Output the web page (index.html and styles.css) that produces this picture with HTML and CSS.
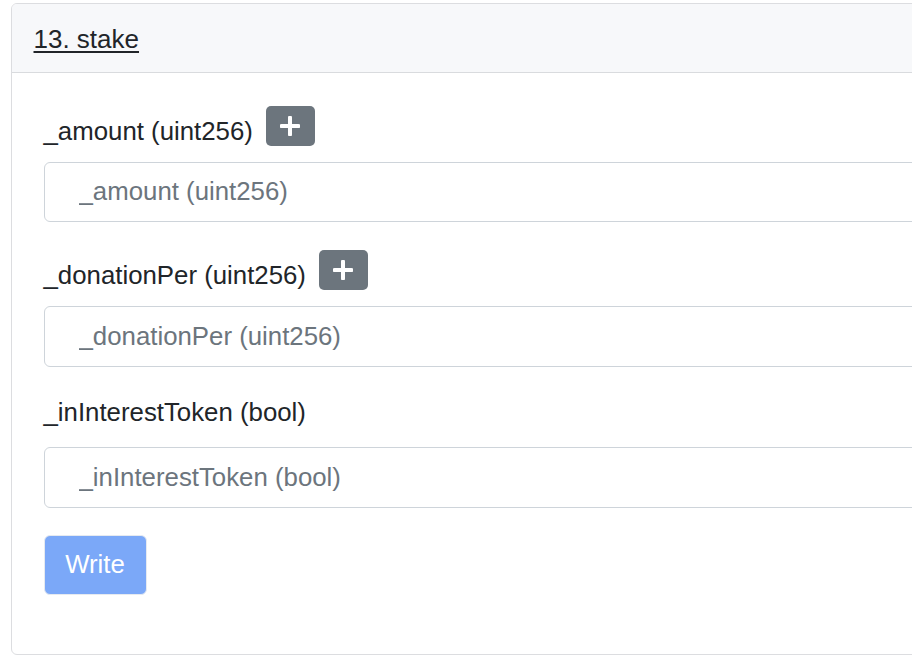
FILE: index.html
```html
<!DOCTYPE html>
<html>
<head>
<meta charset="utf-8">
<link rel="stylesheet" href="styles.css">
</head>
<body>
<div class="card">
  <div class="card-header"><a class="title" href="#">13. stake</a></div>
  <div class="card-body">
    <div class="group">
      <div class="label-row">
        <span class="label">_amount (uint256)</span>
        <button class="plus"><svg width="20" height="20" viewBox="0 0 20 20"><path d="M10 1.5v17M1.5 10h17" stroke="#fff" stroke-width="4" stroke-linecap="round"/></svg></button>
      </div>
      <input class="field" placeholder="_amount (uint256)">
    </div>
    <div class="group">
      <div class="label-row">
        <span class="label">_donationPer (uint256)</span>
        <button class="plus"><svg width="20" height="20" viewBox="0 0 20 20"><path d="M10 1.5v17M1.5 10h17" stroke="#fff" stroke-width="4" stroke-linecap="round"/></svg></button>
      </div>
      <input class="field" placeholder="_donationPer (uint256)">
    </div>
    <div class="group last">
      <div class="label-row plain">
        <span class="label">_inInterestToken (bool)</span>
      </div>
      <input class="field" placeholder="_inInterestToken (bool)">
    </div>
    <button class="write" disabled>Write</button>
  </div>
</div>
</body>
</html>
```
FILE: styles.css
```css
html, body {
  margin: 0;
  padding: 0;
  background: #fff;
  overflow: hidden;
}
body {
  font-family: "Liberation Sans", Arial, Helvetica, sans-serif;
  font-size: 25.8px;
  color: #212529;
  width: 912px;
  height: 662px;
}
.card {
  margin: 2.5px 0 0 10.5px;
  width: 1000px;
  height: 652px;
  box-sizing: border-box;
  border: 1.6px solid #dcdde0;
  border-radius: 6px;
  display: flex;
  flex-direction: column;
}
.card-header {
  height: 68px;
  background: #f7f8fa;
  border-bottom: 1.6px solid #d9dbde;
  display: flex;
  align-items: center;
  padding-left: 22px;
  border-radius: 5px 5px 0 0;
}
.title {
  color: #212529;
  font-size: 26px;
  text-decoration: underline;
  text-underline-offset: 3px;
  text-decoration-thickness: 1.6px;
  padding-top: 3px;
}
.card-body {
  padding: 33px 0 0 32px;
  display: flex;
  flex-direction: column;
  align-items: flex-start;
}
.group {
  display: flex;
  flex-direction: column;
  width: 900px;
  margin-bottom: 28px;
}
.group:nth-child(2) {
  margin-bottom: 26px;
}
.group.last {
  margin-bottom: 27px;
}
.label-row {
  display: flex;
  align-items: center;
  height: 40px;
  margin-bottom: 16px;
}
.label-row.plain {
  height: 38px;
  margin-bottom: 16px;
}
.label {
  padding-top: 10px;
  line-height: 30px;
}
.plain .label {
  padding-top: 0;
}
.plus {
  margin-left: 13px;
  width: 49px;
  height: 40px;
  border: none;
  border-radius: 5px;
  background: #6c757d;
  display: flex;
  align-items: center;
  justify-content: center;
  padding: 0;
}
.plus svg {
  display: block;
}
.field {
  height: 60.8px;
  box-sizing: border-box;
  border: 1.6px solid #ced4da;
  border-radius: 6px;
  padding: 0 0 0 34px;
  font-family: "Liberation Sans", Arial, Helvetica, sans-serif;
  font-size: 25.8px;
  color: #495057;
  background: #fff;
  width: 900px;
}
.field::placeholder {
  color: #6c757d;
  opacity: 1;
}
.write {
  width: 103px;
  height: 60px;
  box-sizing: border-box;
  background: #7ba8f8;
  border: 1.6px solid #e6eaf0;
  border-radius: 6px;
  color: #fff;
  font-family: "Liberation Sans", Arial, Helvetica, sans-serif;
  font-size: 25.8px;
  padding: 0;
}
```
